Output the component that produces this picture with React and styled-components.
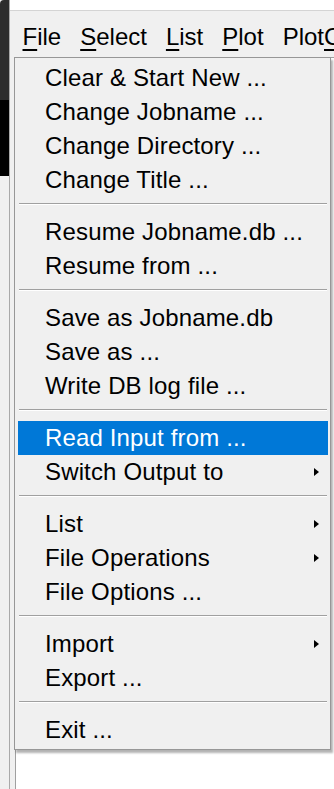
import React from "react";
import styled, { createGlobalStyle } from "styled-components";

const GlobalStyle = createGlobalStyle`
  html, body { margin: 0; padding: 0; background: #f0f0f0; overflow: hidden; }
  * { box-sizing: border-box; }
`;

const Page = styled.div`
  position: relative;
  width: 334px;
  height: 789px;
  display: flex;
  overflow: hidden;
  font-family: "Liberation Sans", Arial, sans-serif;
  color: #000;
`;

const Desktop = styled.div`
  width: 9px;
  display: flex;
  flex-direction: column;
  background: #f0f0f0;
`;

const DesktopBlock = styled.div`
  height: ${(p) => p.$h}px;
  background: ${(p) => p.$c};
  border-top-left-radius: ${(p) => (p.$round ? "4px" : "0")};
`;

const Window = styled.div`
  flex: 1;
  display: flex;
  flex-direction: column;
  border-left: 1px solid #a9a9a9;
  min-width: 0;
`;

const TitleStrip = styled.div`
  height: 11px;
  background: #fff;
  border-bottom: 1px solid #d4d4d4;
`;

const MenuBar = styled.div`
  height: 46px;
  background: #f0f0f0;
  display: flex;
  align-items: flex-start;
  padding: 12px 0 0 3px;
  white-space: nowrap;
  overflow: hidden;
`;

const BarItem = styled.div`
  font-size: 24px;
  line-height: 28px;
  padding: 0 9.5px;
  flex: none;
`;

const Mnemonic = styled.span`
  text-decoration: underline;
  text-decoration-thickness: 2px;
  text-underline-offset: 4px;
`;

const Body = styled.div`
  flex: 1;
  background: #f0f0f0;
  padding-left: 5px;
  display: flex;
`;

const Inner = styled.div`
  flex: 1;
  background: #fff;
  border-left: 1px solid #a0a0a0;
  border-top: 1px solid #a0a0a0;
`;

const Dropdown = styled.div`
  position: absolute;
  left: 14px;
  top: 57px;
  width: 317px;
  background: #f0f0f0;
  border: 1px solid #979797;
  padding: 3px 2px 2px 3px;
  box-shadow: 2px 3px 2px rgba(0, 0, 0, 0.3);
`;

const Item = styled.div`
  height: 34px;
  display: flex;
  align-items: center;
  justify-content: space-between;
  padding: 0 9px 1px 27px;
  font-size: 24px;
  white-space: nowrap;
  background: ${(p) => (p.$active ? "#0078d7" : "transparent")};
  color: ${(p) => (p.$active ? "#fff" : "#000")};
`;

const Label = styled.span`
  letter-spacing: 0.15px;
`;

const Arrow = styled.span`
  width: 0;
  height: 0;
  border-left: 5px solid currentColor;
  border-top: 4px solid transparent;
  border-bottom: 4px solid transparent;
`;

const Separator = styled.div`
  height: 18px;
  padding-top: 6px;
  margin: 0 1px;
  &::before {
    content: "";
    display: block;
    height: 1px;
    background: #a0a0a0;
    border-bottom: 1px solid #fff;
    box-sizing: content-box;
  }
`;

const groups = [
  [
    { t: "Clear & Start New ..." },
    { t: "Change Jobname ..." },
    { t: "Change Directory ..." },
    { t: "Change Title ..." },
  ],
  [{ t: "Resume Jobname.db ..." }, { t: "Resume from ..." }],
  [{ t: "Save as Jobname.db" }, { t: "Save as ..." }, { t: "Write DB log file ..." }],
  [{ t: "Read Input from ...", active: true }, { t: "Switch Output to", sub: true }],
  [{ t: "List", sub: true }, { t: "File Operations", sub: true }, { t: "File Options ..." }],
  [{ t: "Import", sub: true }, { t: "Export ..." }],
  [{ t: "Exit ..." }],
];

const bar = [
  ["F", "ile"],
  ["S", "elect"],
  ["L", "ist"],
  ["P", "lot"],
];

export default function App() {
  return (
    <>
      <GlobalStyle />
      <Page>
        <Desktop>
          <DesktopBlock $h={100} $c="#2d2d2d" $round />
          <DesktopBlock $h={76} $c="#000" />
        </Desktop>
        <Window>
          <TitleStrip />
          <MenuBar>
            {bar.map(([m, rest]) => (
              <BarItem key={m + rest}>
                <Mnemonic>{m}</Mnemonic>
                {rest}
              </BarItem>
            ))}
            <BarItem>
              Plot<Mnemonic>C</Mnemonic>trls
            </BarItem>
          </MenuBar>
          <Body>
            <Inner />
          </Body>
        </Window>
        <Dropdown>
          {groups.map((g, gi) => (
            <React.Fragment key={gi}>
              {gi > 0 && <Separator />}
              {g.map((it) => (
                <Item key={it.t} $active={it.active}>
                  <Label>{it.t}</Label>
                  {it.sub && <Arrow />}
                </Item>
              ))}
            </React.Fragment>
          ))}
        </Dropdown>
      </Page>
    </>
  );
}
